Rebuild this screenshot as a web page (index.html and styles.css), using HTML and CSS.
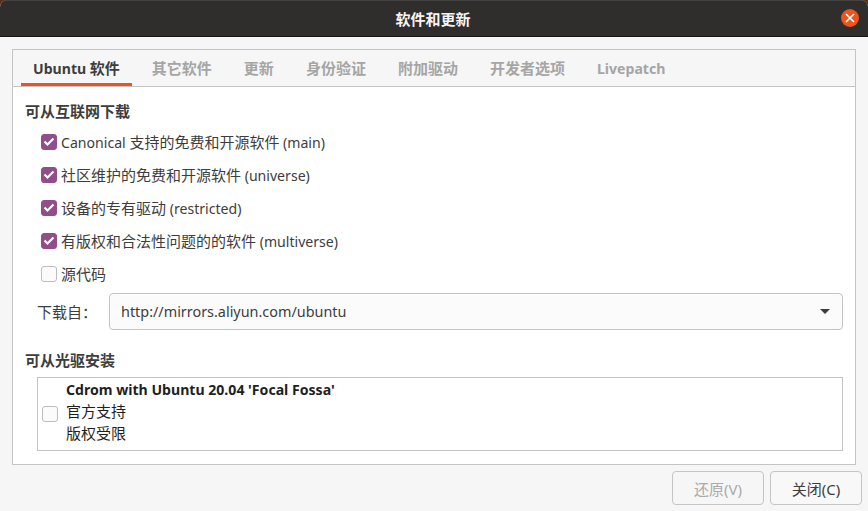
FILE: index.html
```html
<!DOCTYPE html>
<html lang="zh-CN">
<head>
    <meta charset="UTF-8">
    <title>软件和更新</title>
    <link rel="stylesheet" href="styles.css">
</head>
<body>
    <div class="window">
        <header class="titlebar">
            <div class="title">软件和更新</div>
            <div class="close-button">
                <svg width="10" height="10" viewBox="0 0 10 10"><path d="M1 1L9 9M9 1L1 9" stroke="#ffffff" stroke-width="1.6" fill="none"/></svg>
            </div>
        </header>

        <div class="content">
            <div class="notebook">
                <div class="tabs">
                    <div class="tab active"><span class="latin">Ubuntu </span>软件</div>
                    <div class="tab">其它软件</div>
                    <div class="tab">更新</div>
                    <div class="tab">身份验证</div>
                    <div class="tab">附加驱动</div>
                    <div class="tab">开发者选项</div>
                    <div class="tab"><span class="latin">Livepatch</span></div>
                </div>

                <div class="page">
                    <h2 class="section-title">可从互联网下载</h2>
                    <div class="check-list">
                        <div class="check-row"><span class="checkbox checked"><svg width="12" height="10" viewBox="0 0 12 10"><path d="M1.5 4.5L4.5 7.5L10.5 1.5" stroke="#ffffff" stroke-width="2.2" fill="none"/></svg></span><span><span class="latin">Canonical </span>支持的免费和开源软件<span class="latin"> (main)</span></span></div>
                        <div class="check-row"><span class="checkbox checked"><svg width="12" height="10" viewBox="0 0 12 10"><path d="M1.5 4.5L4.5 7.5L10.5 1.5" stroke="#ffffff" stroke-width="2.2" fill="none"/></svg></span><span>社区维护的免费和开源软件<span class="latin"> (universe)</span></span></div>
                        <div class="check-row"><span class="checkbox checked"><svg width="12" height="10" viewBox="0 0 12 10"><path d="M1.5 4.5L4.5 7.5L10.5 1.5" stroke="#ffffff" stroke-width="2.2" fill="none"/></svg></span><span>设备的专有驱动<span class="latin"> (restricted)</span></span></div>
                        <div class="check-row"><span class="checkbox checked"><svg width="12" height="10" viewBox="0 0 12 10"><path d="M1.5 4.5L4.5 7.5L10.5 1.5" stroke="#ffffff" stroke-width="2.2" fill="none"/></svg></span><span>有版权和合法性问题的的软件<span class="latin"> (multiverse)</span></span></div>
                        <div class="check-row"><span class="checkbox"></span><span>源代码</span></div>
                    </div>

                    <div class="download-row">
                        <span class="download-label">下载自：</span>
                        <div class="select">
                            <span class="select-value">http://mirrors.aliyun.com/ubuntu</span>
                            <span class="arrow"></span>
                        </div>
                    </div>

                    <h2 class="section-title cdrom-title">可从光驱安装</h2>
                    <div class="cdrom-list">
                        <span class="checkbox"></span>
                        <div class="cdrom-text">
                            <div class="cdrom-name"><span class="latin">Cdrom with Ubuntu 20.04 'Focal Fossa'</span></div>
                            <div>官方支持</div>
                            <div>版权受限</div>
                        </div>
                    </div>
                </div>
            </div>

            <div class="actions">
                <button class="button" disabled>还原(V)</button>
                <button class="button">关闭(C)</button>
            </div>
        </div>
    </div>
</body>
</html>
```

FILE: styles.css
```css
* {
    box-sizing: border-box;
}

html, body {
    height: 100%;
}

body {
    margin: 0;
    overflow: hidden;
    background-color: #5a2d1a;
    color: #3d3d3d;
    font-family: 'Noto Sans', 'Noto Sans CJK SC', sans-serif;
    font-size: 15px;
}

/* latin runs sit a bit smaller than the CJK text around them */
.latin {
    font-size: 14.1px;
}

.window {
    display: flex;
    flex-direction: column;
    height: 511px;
    background-color: #f6f6f6;
    border-radius: 7px 7px 0 0;
    overflow: hidden;
}

.titlebar {
    display: flex;
    align-items: center;
    justify-content: center;
    position: relative;
    height: 37px;
    background-color: #302d2d;
    border-top: 1px solid #454242;
    border-bottom: 1px solid #171515;
    flex-shrink: 0;
}

.title {
    margin-right: 2px;
    color: #f5f5f5;
    font-weight: 700;
}

.close-button {
    position: absolute;
    top: 8px;
    right: 9px;
    width: 18px;
    height: 18px;
    display: flex;
    justify-content: center;
    align-items: center;
    border-radius: 50%;
    background-color: #e9541f;
}

.content {
    display: flex;
    flex-direction: column;
    flex: 1;
    padding: 12px 6px 6px 12px;
}

.notebook {
    display: flex;
    flex-direction: column;
    width: 844px;
    height: 416px;
    border: 1px solid #c4c4c4;
}

.tabs {
    display: flex;
    gap: 8px;
    height: 37px;
    padding-left: 8px;
    background-color: #f6f6f6;
    border-bottom: 1px solid #c4c4c4;
}

.tab {
    height: 36px;
    padding: 0 12px;
    line-height: 36px;
    font-weight: 700;
    color: #a5a5a5;
    white-space: nowrap;
}

.tab.active {
    color: #3d3d3d;
    border-bottom: 3px solid #e95420;
}

.page {
    flex: 1;
    padding: 14px 12px 0 12px;
    background-color: #ffffff;
}

.section-title {
    margin: 0;
    height: 20px;
    line-height: 20px;
    font-size: 15px;
    font-weight: 700;
    color: #3d3d3d;
}

.check-list {
    margin-top: 4px;
    padding-left: 16px;
}

.check-row {
    display: flex;
    align-items: center;
    gap: 4px;
    height: 33px;
    white-space: nowrap;
}

.checkbox {
    display: flex;
    justify-content: center;
    align-items: center;
    width: 16px;
    height: 16px;
    flex-shrink: 0;
    border: 1px solid #bdbdbd;
    border-radius: 3px;
    background-color: #fbfbfb;
}

.checkbox.checked {
    border-color: #924d8b;
    background-color: #924d8b;
}

.download-row {
    display: flex;
    align-items: center;
    margin-top: 3px;
    padding-left: 12px;
}

.download-label {
    width: 72px;
    flex-shrink: 0;
}

.select {
    display: flex;
    justify-content: space-between;
    align-items: center;
    width: 734px;
    height: 37px;
    padding: 0 12px 0 11px;
    border: 1px solid #c4c4c4;
    border-radius: 4px;
    background-color: #fbfbfb;
}

.select-value {
    font-size: 14.4px;
}

.arrow {
    width: 0;
    height: 0;
    border-top: 5px solid #3d3d3d;
    border-left: 5px solid transparent;
    border-right: 5px solid transparent;
}

.cdrom-title {
    margin-top: 20px;
}

.cdrom-list {
    display: flex;
    align-items: center;
    gap: 8px;
    width: 806px;
    height: 74px;
    margin-top: 7px;
    margin-left: 12px;
    padding-left: 4px;
    border: 1px solid #c4c4c4;
    background-color: #ffffff;
    color: #1f1f1f;
}

.cdrom-text {
    padding-bottom: 7px;
    line-height: 22px;
}

.cdrom-name {
    margin-bottom: -1px;
    font-weight: 700;
}

.actions {
    display: flex;
    justify-content: flex-end;
    gap: 6px;
    margin-top: 6px;
}

.button {
    width: 92px;
    height: 34px;
    border: 1px solid #c4c4c4;
    border-radius: 4px;
    background-color: #f8f8f8;
    color: #3d3d3d;
    font-family: inherit;
    font-size: 15px;
}

.button:disabled {
    color: #aaaaaa;
    background-color: #f6f6f6;
}
```
